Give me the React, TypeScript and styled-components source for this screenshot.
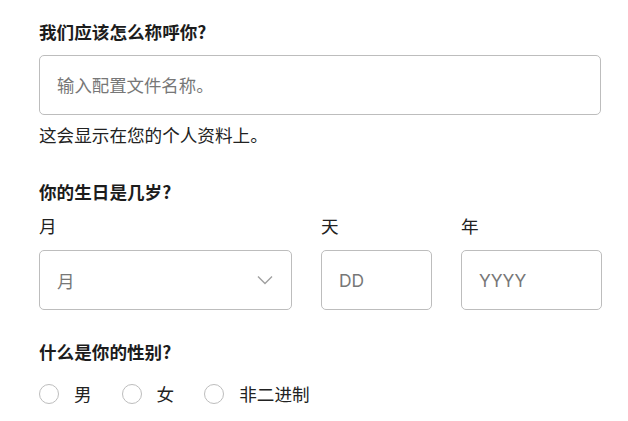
import React from "react"
import styled, { createGlobalStyle } from "styled-components"

const GlobalStyle = createGlobalStyle`
  body {
    margin: 0;
    background: #ffffff;
    font-family: "Noto Sans CJK SC", "Noto Sans", sans-serif;
    font-size: 17.6px;
    color: #222222;
  }
`

const Form = styled.form`
  width: 562px;
  padding: 19px 0 0 39px;
  display: flex;
  flex-direction: column;
`

const Section = styled.div<{ $after?: number }>`
  display: flex;
  flex-direction: column;
  margin-bottom: ${(p) => p.$after ?? 31}px;

  &:last-child {
    margin-bottom: 0;
  }
`

const Heading = styled.h2`
  margin: 0 0 10px;
  font-size: 17.6px;
  font-weight: 700;
  line-height: 26px;
  color: #1c1c1c;
`

const TextBox = styled.input`
  box-sizing: border-box;
  height: 60px;
  width: 100%;
  padding: 0 17px;
  border: 1px solid #bdbdbd;
  border-radius: 5px;
  font-family: Inter, "Noto Sans CJK SC", sans-serif;
  font-size: 17.4px;
  color: #222222;
  background: #ffffff;
  outline: none;

  &::placeholder {
    color: #777777;
  }
`

const Helper = styled.p`
  margin: 7px 0 0;
  font-size: 17.6px;
  line-height: 26px;
  color: #222222;
`

const DateGrid = styled.div`
  display: grid;
  grid-template-columns: 253px 111px 141px;
  column-gap: 29px;
`

const Field = styled.label`
  display: flex;
  flex-direction: column;
  gap: 13px;
`

const FieldLabel = styled.span`
  font-size: 17.6px;
  line-height: 22px;
  color: #222222;
`

const SelectBox = styled.div`
  box-sizing: border-box;
  height: 60px;
  border: 1px solid #bdbdbd;
  border-radius: 5px;
  display: flex;
  align-items: center;
  justify-content: space-between;
  padding: 0 18px 0 17px;
  font-size: 17.6px;
  color: #777777;
`

const Chevron = () => (
  <svg width="16" height="10" viewBox="0 0 16 10" fill="none">
    <path d="M1 1.5 L8 8.5 L15 1.5" stroke="#a0a0a0" strokeWidth="1.4" />
  </svg>
)

const RadioRow = styled.div`
  display: flex;
  align-items: center;
  gap: 30px;
  margin-top: 6px;
`

const RadioOption = styled.label`
  display: flex;
  align-items: center;
  gap: 15px;
  font-size: 17.6px;
  line-height: 26px;
  color: #222222;
`

const RadioCircle = styled.span`
  box-sizing: border-box;
  width: 20px;
  height: 20px;
  border-radius: 50%;
  border: 1px solid #bdbdbd;
  background: #ffffff;
`

const genders = ["男", "女", "非二进制"]

const App = () => {
  return (
    <>
      <GlobalStyle />
      <Form>
        <Section>
          <Heading>我们应该怎么称呼你?</Heading>
          <TextBox placeholder="输入配置文件名称。" />
          <Helper>这会显示在您的个人资料上。</Helper>
        </Section>
        <Section $after={29}>
          <Heading>你的生日是几岁?</Heading>
          <DateGrid>
            <Field>
              <FieldLabel>月</FieldLabel>
              <SelectBox>
                <span>月</span>
                <Chevron />
              </SelectBox>
            </Field>
            <Field>
              <FieldLabel>天</FieldLabel>
              <TextBox placeholder="DD" />
            </Field>
            <Field>
              <FieldLabel>年</FieldLabel>
              <TextBox placeholder="YYYY" />
            </Field>
          </DateGrid>
        </Section>
        <Section>
          <Heading>什么是你的性别?</Heading>
          <RadioRow>
            {genders.map((g) => (
              <RadioOption key={g}>
                <RadioCircle />
                {g}
              </RadioOption>
            ))}
          </RadioRow>
        </Section>
      </Form>
    </>
  )
}

export default App
